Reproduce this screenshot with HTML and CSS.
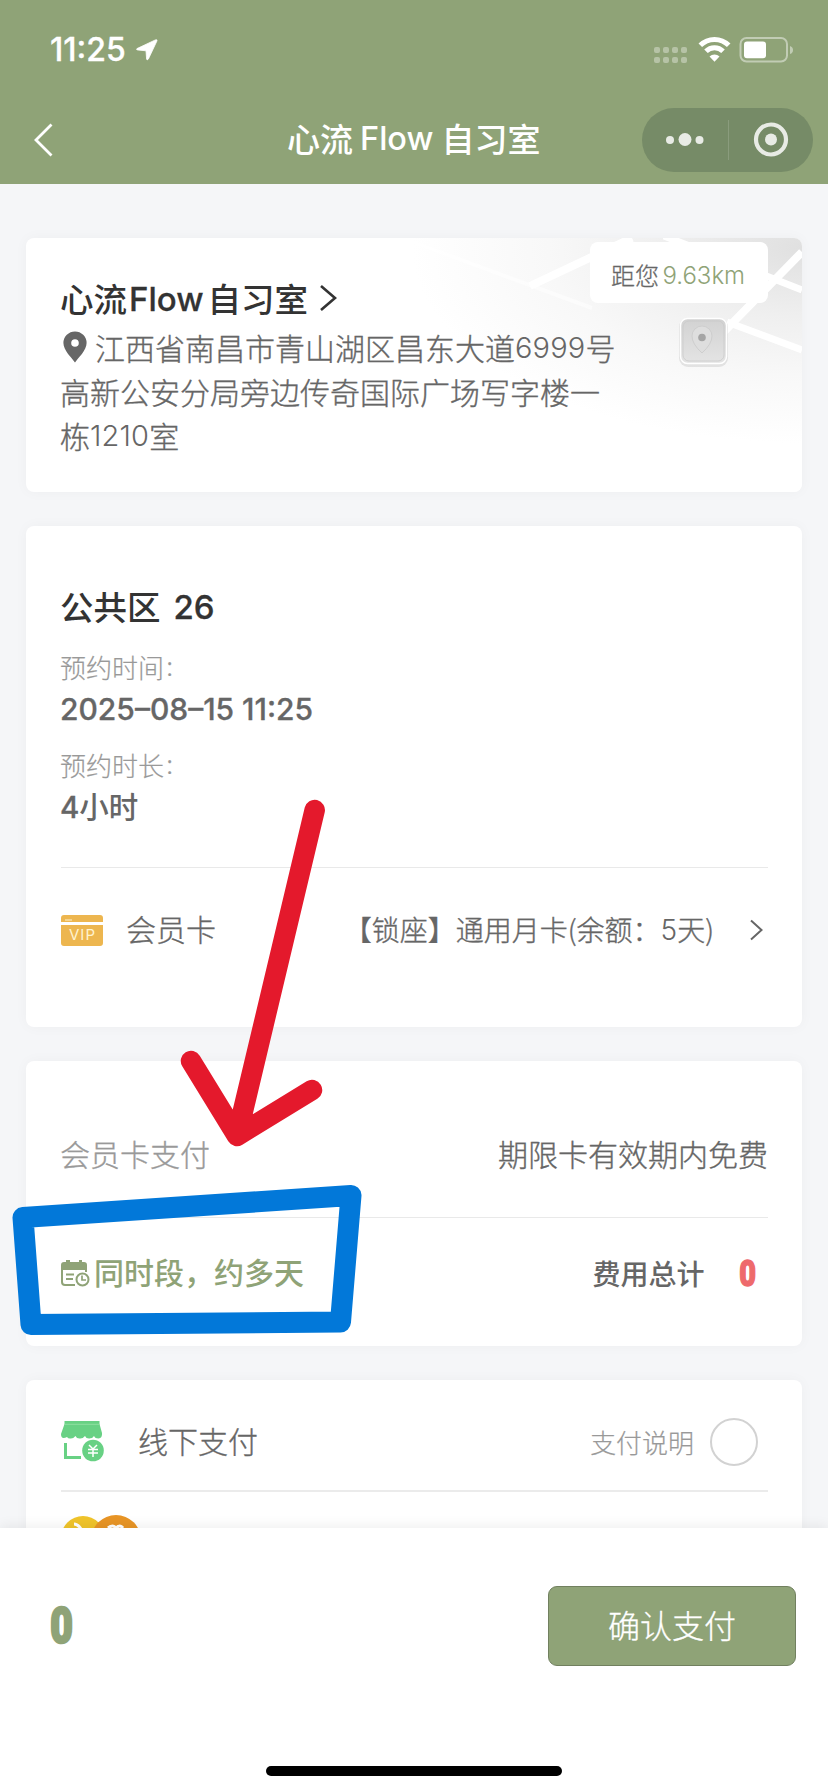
FILE: index.html
```html
<!DOCTYPE html>
<html lang="zh-CN">
<head>
<meta charset="utf-8">
<title>心流Flow自习室</title>
<link rel="stylesheet" href="styles.css">
</head>
<body>
<header class="header">
  <div class="status">
    <span class="time">11:25</span>
    <svg class="locate" width="22" height="22" viewBox="0 0 22 22"><path d="M1 9.600Q-.2 10.600 1.400 10.900L10 11.800 10.600 20Q11 21.800 12.400 20L21 1.800Q21.300 .2 19.400 .9Z" fill="#fff" stroke="#fff" stroke-width=".8"/></svg>
    <svg class="signals" width="142" height="30" viewBox="0 0 142 30">
      <g fill="#fff" fill-opacity=".35"><rect x="1" y="12" width="6" height="6" rx="2"/><rect x="10" y="12" width="6" height="6" rx="2"/><rect x="19" y="12" width="6" height="6" rx="2"/><rect x="28" y="12" width="6" height="6" rx="2"/><rect x="1" y="22" width="6" height="6" rx="2"/><rect x="10" y="22" width="6" height="6" rx="2"/><rect x="19" y="22" width="6" height="6" rx="2"/><rect x="28" y="22" width="6" height="6" rx="2"/></g>
      <g fill="none" stroke="#fff" stroke-width="5"><path d="M47.300 10.300a20 20 0 0 1 28.400 0"/><path d="M53 16.300a12 12 0 0 1 17 0"/></g>
      <path d="M61.500 26.800L56.500 21.400a7.300 7.300 0 0 1 10 0Z" fill="#fff"/>
      <rect x="87.500" y="3" width="46.500" height="23.500" rx="6" fill="none" stroke="#fff" stroke-opacity=".45" stroke-width="2"/>
      <rect x="91" y="6.500" width="22" height="16.800" rx="3" fill="#fff"/>
      <path d="M137 11q3 1 3 4t-3 4Z" fill="#fff" fill-opacity=".45"/>
    </svg>
  </div>
  <nav class="nav">
    <svg class="back" width="20" height="36" viewBox="0 0 20 36"><path d="M17.500 2.500L2 18 17.500 33.500" fill="none" stroke="#fff" stroke-width="2.800"/></svg>
    <h1 class="nav-title"><span>心流</span><span class="nav-latin">Flow</span><span>自习室</span></h1>
    <div class="capsule">
      <svg width="171" height="64" viewBox="0 0 171 64"><g fill="#fff" fill-opacity=".83"><circle cx="28" cy="32" r="4"/><circle cx="43" cy="31.500" r="6.500"/><circle cx="57.500" cy="32" r="4"/><circle cx="129" cy="31.500" r="6"/></g><circle cx="129" cy="31.500" r="15" fill="none" stroke="#fff" stroke-opacity=".83" stroke-width="4.200"/><path d="M86.500 12v40" stroke="#fff" stroke-opacity=".15"/></svg>
    </div>
  </nav>
</header>

<main class="content">
  <section class="card store">
    <svg class="map" width="400" height="254" viewBox="0 0 400 254">
      <defs>
        <radialGradient id="fade" gradientUnits="userSpaceOnUse" cx="400" cy="10" r="1" gradientTransform="translate(400 10) scale(390 195) translate(-400 -10)"><stop offset="0" stop-color="#e0e0e0"/><stop offset=".35" stop-color="#efefef"/><stop offset=".65" stop-color="#f8f8f8"/><stop offset="1" stop-color="#fff"/></radialGradient>
        <linearGradient id="pin" x2="0" y2="1"><stop offset="0" stop-color="#d2d2d2"/><stop offset="1" stop-color="#e4e4e4"/></linearGradient>
      </defs>
      <path d="M0 0H400V254H0Z" fill="url(#fade)"/>
      <g stroke="#fff" fill="none"><path d="M128 48L230 0M400 14L306 110" stroke-width="8"/><path d="M262 -2L400 52M325 84L400 112" stroke-width="7"/><path d="M0 0L190 70" stroke-width="4" opacity=".5"/></g>
      <rect x="277" y="80" width="49" height="49" rx="9" fill="#b9b9b9" opacity=".35"/>
      <rect x="278.500" y="80.500" width="46" height="45" rx="7" fill="url(#pin)" stroke="#fff" stroke-width="1.500"/>
      <rect x="281" y="83" width="41" height="40" rx="6" fill="none" stroke="#c9c9c9" opacity=".7"/>
      <path d="M300 115Q290 106 290 98a10 10 0 0 1 20 0Q310 106 300 115Z" fill="#dedede" stroke="#cecece"/>
      <circle cx="300" cy="99.500" r="3.800" fill="#a5a5a5"/>
    </svg>
    <div class="distance"><span>距您</span><span class="km">9.63km</span></div>
    <h2 class="store-name"><span>心流</span><span class="store-latin">Flow</span><span>自习室</span>
      <svg width="18" height="28" viewBox="0 0 18 28"><path d="M2 2L16 14 2 26" fill="none" stroke="#333" stroke-width="2.600"/></svg></h2>
    <p class="address">
      <span class="line"><svg class="pin" width="24" height="32" viewBox="0 0 24 32"><path fill-rule="evenodd" d="M12 31.500C9 27 .4 19.500 .4 12A11.600 11.600 0 0 1 23.600 12C23.600 19.500 15 27 12 31.500ZM12 8.200a3.800 3.800 0 1 0 0 7.600 3.800 3.800 0 0 0 0-7.600Z" fill="#666"/></svg>江西省南昌市青山湖区昌东大道<span class="num">6999</span>号</span>
      <span class="line">高新公安分局旁边传奇国际广场写字楼一</span>
      <span class="line">栋<span class="num">1210</span>室</span>
    </p>
  </section>

  <section class="card booking">
    <h2 class="seat"><span>公共区</span><span class="seat-no">26</span></h2>
    <p class="label">预约时间<span class="colon">:</span></p>
    <p class="value date">2025–08–15 11:25</p>
    <p class="label second">预约时长<span class="colon">:</span></p>
    <p class="value"><span class="latin">4</span>小时</p>
    <div class="member">
      <svg width="43" height="31" viewBox="0 0 43 31"><path d="M0 7V3Q0 0 3 0H39Q42 0 42 3V7ZM0 10H42V28Q42 31 39 31H3Q0 31 0 28Z" fill="#edb64f"/><path d="M4 5H11" stroke="#fff3cf"/><text x="21.500" y="25" text-anchor="middle" class="vip">VIP</text></svg>
      <span class="member-name">会员卡</span>
      <span class="plan"><span>【锁座】</span><span>通用月卡(余额：</span><span class="five">5</span><span>天)</span></span>
      <svg width="14" height="22" viewBox="0 0 14 22"><path d="M2 1.500L12.500 11 2 20.500" fill="none" stroke="#666" stroke-width="2"/></svg>
    </div>
  </section>

  <section class="card fee">
    <div class="fee-row"><span class="muted">会员卡支付</span><span class="free">期限卡有效期内免费</span></div>
    <div class="total-row">
      <svg width="29" height="27" viewBox="0 0 29 27"><path d="M0 10V5Q0 2 3 2H5V0H9V2H18V0H21V2H23Q26 2 26 5V10Z" fill="#8fa377"/><g fill="none" stroke="#8fa377" stroke-width="2"><path d="M1 10V22Q1 25 4 25H14M25 10V12M5 14.500H13M5 19H12"/><circle cx="21.500" cy="19.500" r="6"/><path d="M21 15.500V20H25" stroke-width="1.700"/></g></svg>
      <span class="multi">同时段，约多天</span>
      <span class="total-label">费用总计</span>
      <span class="total">0</span>
    </div>
  </section>

  <section class="card methods">
    <div class="method">
      <svg width="44" height="42" viewBox="0 0 44 42"><path d="M3.500 0H38.500V3L41 12Q41.500 17 37.500 17.500 34 17.500 33 15 31 18 28 17.500 25 17.500 24 15 21.500 18 18.500 17.500 15.500 17.500 14.500 15 12 18 9 17.500 7 17.500 6 16 0 19 0 13L3.500 3Z" fill="#68d184"/><path d="M3.500 3.300H38.500" stroke="#8fdfa2"/><path d="M4.500 22V36.500H20" fill="none" stroke="#68d184" stroke-width="3"/><circle cx="31.500" cy="29.500" r="12" fill="#fff"/><circle cx="32" cy="29.500" r="10.800" fill="#68d184"/><path d="M28 24L32 28 36 24M27 28.500H37M27 32H37M32 28V36" fill="none" stroke="#fff" stroke-width="1.500"/></svg>
      <span class="method-name">线下支付</span>
      <span class="method-note">支付说明</span>
      <span class="radio"></span>
    </div>
    <svg class="coins" width="80" height="50" viewBox="0 0 80 50"><circle cx="22" cy="23" r="22" fill="#f0c42b"/><circle cx="55" cy="25" r="25" fill="#e89526"/><g fill="none" stroke="#fff" stroke-width="3"><path d="M13 9Q17 9 20 14M47 13Q52 9 55 13Q59 9 62 13"/></g></svg>
  </section>
</main>

<footer class="footer">
  <div class="pay-bar"><span class="amount">0</span><button class="confirm">确认支付</button></div>
  <div class="home"></div>
</footer>

<svg class="markup" width="828" height="1792" viewBox="0 0 828 1792" fill="none" stroke-linecap="round" stroke-linejoin="round">
  <path d="M314.700 810L237 1136M191 1061L237 1136L312 1090" stroke="#e4192c" stroke-width="20.500"/>
  <path d="M23 1217.500L351 1195.500L340.500 1322L31 1324.500Z" stroke="#0278d9" stroke-width="21"/>
</svg>
</body>
</html>
```
FILE: styles.css
```css
* { box-sizing: border-box; }
body {
  margin: 0; width: 828px; height: 1792px; overflow: hidden; position: relative;
  display: flex; flex-direction: column; background: #f5f6f8; color: #666;
  font-family: "Noto Sans CJK SC", sans-serif; font-weight: 300;
}
h1, h2, p { margin: 0; }
svg { display: block; flex: none; }
span { white-space: nowrap; }

.header { height: 184px; flex: none; background: #8fa377; color: #fff; }
.status { height: 96px; padding: 4px 33px 0 50px; display: flex; align-items: center; }
.time { font: 500 32px/1 Inter, sans-serif; width: 86px; -webkit-text-stroke: .3px; }
.signals { margin-left: auto; }
.nav { height: 88px; padding: 0 15px 0 34px; display: flex; align-items: center; }
.nav-title { font-size: 33px; line-height: 48px; font-weight: 500; display: flex; margin: -2px auto 0 233px; }
.nav-latin { font: 500 32.500px/50px Inter, sans-serif; margin: 0 8px 0 7px; }
.capsule { width: 171px; height: 64px; border-radius: 32px; background: #768b67; }

.content { flex: 1; min-height: 0; overflow: hidden; padding: 54px 26px 0; display: flex; flex-direction: column; gap: 34px; }
.card { background: #fff; border-radius: 8px; padding: 0 34px 0 35px; flex: none; box-shadow: 0 0 14px rgba(50, 60, 70, .035); position: relative; }

.store { height: 254px; padding-top: 35px; overflow: hidden; }
.map { position: absolute; right: 0; top: 0; }
.distance { position: absolute; right: 34px; top: 4px; width: 178px; height: 61px; padding: 3px 23px 0 21px; border-radius: 8px; background: #fff; display: flex; justify-content: space-between; align-items: center; font-size: 24px; -webkit-text-stroke: .3px; }
.km { font-family: Inter, sans-serif; color: #8fa377; padding-top: 2px; -webkit-text-stroke: 0; }
.store-name { position: relative; font-size: 33.500px; line-height: 48px; color: #333; font-weight: 500; display: flex; align-items: center; margin-left: -1px; }
.store-latin { font-family: Inter, sans-serif; font-weight: 500; font-size: 33px; margin: 2px 4px 0 2px; -webkit-text-stroke: .3px; }
.store-name svg { margin-left: 11px; }
.address { position: relative; font-size: 30px; line-height: 44px; padding-top: 2px; margin-left: -1px; -webkit-text-stroke: .35px; }
.line { display: flex; align-items: center; height: 44px; }
.pin { margin: 0 8px 0 3px; }
.num { font-family: Inter, sans-serif; font-size: 29px; padding-top: 2px; letter-spacing: .15px; -webkit-text-stroke: 0; }

.booking { height: 501px; padding-top: 56px; }
.seat { font-size: 33.500px; line-height: 48px; color: #333; font-weight: 500; display: flex; margin-left: -1px; }
.seat-no { font: 500 33px/51px Inter, sans-serif; margin-left: 13px; -webkit-text-stroke: .3px; }
.label { font-size: 26px; line-height: 36px; margin: 16px 0 0 -1px; color: #999; display: flex; -webkit-text-stroke: .2px; }
.colon { font-family: Inter, sans-serif; margin-left: 2px; }
.value { font-size: 29.500px; line-height: 44px; font-weight: 500; color: #666; margin-left: -1px; }
.date { font-family: Inter, sans-serif; font-size: 30px; padding-top: 2px; -webkit-text-stroke: .3px; }
.latin { font-family: Inter, sans-serif; font-weight: 500; -webkit-text-stroke: .3px; }
.label.second { margin-top: 16px; }
.member { margin-top: 38px; border-top: 1px solid #e9e9e9; height: 128px; display: flex; align-items: center; padding: 0 5px 3px 0; }
.vip { font: 400 15px Inter, sans-serif; fill: #fff3cf; letter-spacing: 1px; }
.member-name { font-size: 30px; margin: -4px 0 0 22px; -webkit-text-stroke: .35px; }
.plan { font-size: 28px; margin: -3px 35px 0 auto; display: flex; align-items: center; -webkit-text-stroke: .35px; }
.five { font-family: Inter, sans-serif; -webkit-text-stroke: 0; padding-top: 2px; }

.fee { height: 285px; padding-top: 33px; }
.fee-row { height: 123px; display: flex; align-items: center; justify-content: space-between; font-size: 30px; padding-bottom: 5px; margin-left: -1px; -webkit-text-stroke: .35px; }
.muted { color: #999; }
.total-row { height: 112px; border-top: 1px solid #e9e9e9; display: flex; align-items: center; }
.multi { font-size: 30px; font-weight: 500; color: #8fa377; margin: -5px 0 0 4px; }
.total-label { font-size: 28px; font-weight: 500; margin: -2px 0 0 auto; }
.total { font: 900 37px/1 Roboto, sans-serif; color: #ee6a6c; transform: scaleX(.78); margin: 0 10px 0 32px; -webkit-text-stroke: 1.5px; }

.methods { height: 300px; }
.method { height: 112px; padding-top: 14px; border-bottom: 2px solid #ebebeb; display: flex; align-items: center; padding-right: 10px; }
.method-name { font-size: 30px; margin: -4px 0 0 33px; -webkit-text-stroke: .35px; }
.method-note { font-size: 26px; color: #999; margin: -2px 0 0 auto; -webkit-text-stroke: .2px; }
.radio { width: 48px; height: 48px; border: 2px solid #d2d2d2; border-radius: 50%; margin-left: 16px; }
.coins { margin-top: 23px; }

.footer { position: relative; height: 264px; flex: none; background: #fff; box-shadow: 0 -2px 12px rgba(0, 0, 0, .07); display: flex; flex-direction: column; align-items: center; }
.pay-bar { width: 100%; height: 196px; padding: 0 32px 0 47px; display: flex; align-items: center; justify-content: space-between; }
.amount { font: 900 50px/1 Roboto, sans-serif; color: #8fa377; transform: scaleX(.78); -webkit-text-stroke: 2.500px; }
.confirm { width: 248px; height: 80px; border: 1px solid #71805f; border-radius: 9px; background: #8fa377; color: #fff; font: 300 32px "Noto Sans CJK SC", sans-serif; padding: 0 0 5px; -webkit-text-stroke: .3px; }
.home { width: 296px; height: 10px; border-radius: 5px; background: #000; margin-top: 42px; }
.markup { position: absolute; left: 0; top: 0; pointer-events: none; }
```
